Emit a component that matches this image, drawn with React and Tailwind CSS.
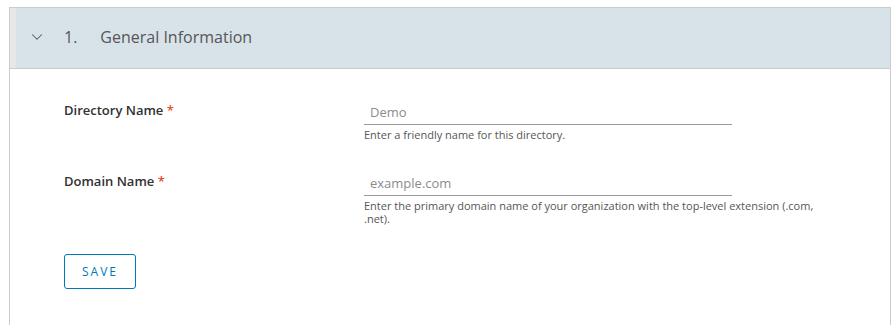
import { ChevronDown } from "lucide-react";

function Field({ label, placeholder, help }) {
  return (
    <div className="flex items-start">
      <div className="w-[300px] shrink-0 pt-[2px] text-[13px] font-semibold text-[#313131]">
        {label} <span className="text-[#e62700] font-normal">*</span>
      </div>
      <div className="flex flex-col">
        <input
          placeholder={placeholder}
          className="w-[368px] h-[26px] px-[6px] text-[13px] border-b border-[#9a9a9a] outline-none placeholder:text-[#8c8c8c] bg-transparent"
        />
        <p className="mt-[3px] w-[470px] text-[11px] leading-[13px] text-[#565656]">{help}</p>
      </div>
    </div>
  );
}

export default function App() {
  return (
    <div className="w-[896px] h-[325px] bg-white overflow-hidden pt-[7px] pl-[9px] font-['Open_Sans',sans-serif]">
      <div className="w-[882px] h-[330px] border border-[#cccccc] border-b-0 flex flex-col">
        {/* header */}
        <div className="h-[61px] flex border-b border-[#cccccc] bg-[#d8e3e9]">
          <div className="w-[6px] bg-[#e8e8e8]" />
          <div className="flex items-center pl-[12px] pb-[2px] text-[16px] text-[#565656]">
            <ChevronDown className="w-[18px] h-[18px] text-[#565656]" strokeWidth={1.4} />
            <span className="ml-[18px]">1.</span>
            <span className="ml-[23px]">General Information</span>
          </div>
        </div>

        {/* body */}
        <div className="pl-[54px] pt-[30px] flex flex-col">
          <Field
            label="Directory Name"
            placeholder="Demo"
            help="Enter a friendly name for this directory."
          />
          <div className="mt-[29px]">
            <Field
              label="Domain Name"
              placeholder="example.com"
              help="Enter the primary domain name of your organization with the top-level extension (.com, .net)."
            />
          </div>
          <button className="mt-[29px] w-[72px] h-[35px] border border-[#0079b8] rounded-[3px] text-[12px] tracking-[2px] text-[#0079b8]">
            SAVE
          </button>
        </div>
      </div>
    </div>
  );
}
